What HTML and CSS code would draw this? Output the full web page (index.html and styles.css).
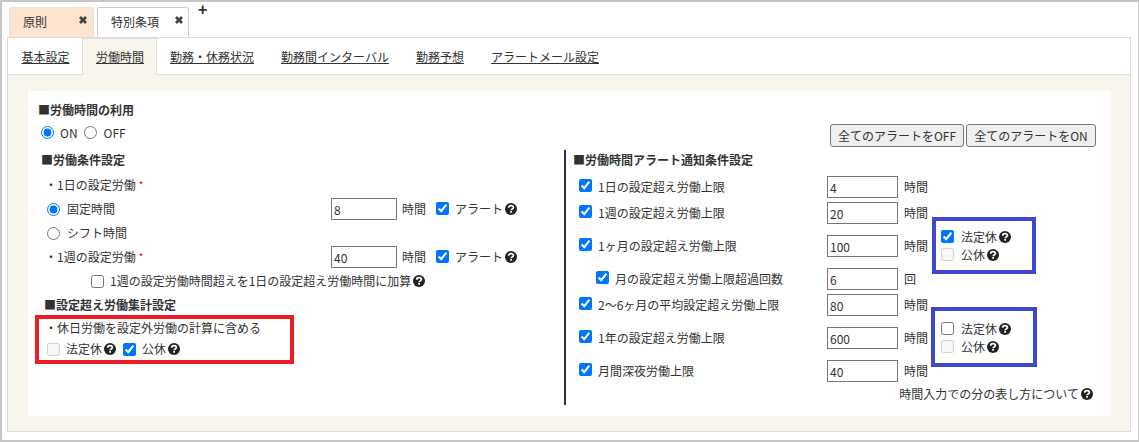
FILE: index.html
```html
<!DOCTYPE html>
<html lang="ja">
<head>
<meta charset="utf-8">
<title>特別条項</title>
<link rel="stylesheet" href="styles.css">
</head>
<body>
<svg class="defs" width="0" height="0" aria-hidden="true">
  <symbol id="help" viewBox="0 0 12 12">
    <circle cx="6" cy="6" r="6" fill="#222"/>
    <path d="M3.7 4.7C3.7 3.4 4.7 2.7 6 2.7C7.4 2.7 8.4 3.5 8.4 4.6C8.4 5.9 6.2 5.9 6.1 7.2" fill="none" stroke="#fff" stroke-width="1.7"/>
    <rect x="5.2" y="8" width="1.8" height="1.7" fill="#fff"/>
  </symbol>
  <symbol id="close" viewBox="0 0 10 10">
    <path d="M2 2L8 8M8 2L2 8" fill="none" stroke="#444" stroke-width="2.8"/>
  </symbol>
</svg>
<div class="frame">
  <div class="tabs">
    <div class="tab tab-peach"><span class="tab-label">原則</span><svg class="close"><use href="#close"/></svg></div>
    <div class="tab tab-white"><span class="tab-label">特別条項</span><svg class="close"><use href="#close"/></svg></div>
    <span class="plus">+</span>
  </div>
  <div class="panel">
    <nav class="subnav">
      <a class="subnav-item">基本設定</a>
      <a class="subnav-item active">労働時間</a>
      <a class="subnav-item">勤務・休務状況</a>
      <a class="subnav-item">勤務間インターバル</a>
      <a class="subnav-item">勤務予想</a>
      <a class="subnav-item">アラートメール設定</a>
    </nav>
    <div class="content">
      <div class="card">
        <div class="top">
          <div class="usage">
            <div class="heading">■労働時間の利用</div>
            <div class="onoff">
              <input type="radio" name="use" checked><span class="on-label">ON</span>
              <input type="radio" name="use"><span class="off-label">OFF</span>
            </div>
          </div>
          <div class="buttons">
            <button class="btn btn-off">全てのアラートをOFF</button>
            <button class="btn btn-on">全てのアラートをON</button>
          </div>
        </div>
        <div class="columns">
          <section class="left">
            <div class="heading h-left">■労働条件設定</div>
            <div class="lrow">
              <div class="lcell bullet">・1日の設定労働<span class="req">*</span></div>
            </div>
            <div class="lrow">
              <div class="lcell pick"><input type="radio" name="mode" checked><span>固定時間</span></div>
              <input class="num" type="text" value="8">
              <span class="unit">時間</span>
              <input class="alert-check" type="checkbox" checked>
              <span class="alert-label">アラート</span>
              <svg class="help"><use href="#help"/></svg>
            </div>
            <div class="lrow">
              <div class="lcell pick"><input type="radio" name="mode"><span>シフト時間</span></div>
            </div>
            <div class="lrow">
              <div class="lcell bullet">・1週の設定労働<span class="req">*</span></div>
              <input class="num" type="text" value="40">
              <span class="unit">時間</span>
              <input class="alert-check" type="checkbox" checked>
              <span class="alert-label">アラート</span>
              <svg class="help"><use href="#help"/></svg>
            </div>
            <div class="lrow add-row">
              <input type="checkbox">
              <span class="add-label">1週の設定労働時間超えを1日の設定超え労働時間に加算</span>
              <svg class="help"><use href="#help"/></svg>
            </div>
            <div class="heading h-over">■設定超え労働集計設定</div>
            <div class="holiday-title bullet">・休日労働を設定外労働の計算に含める</div>
            <div class="holiday-row">
              <input type="checkbox" disabled>
              <span class="hol-label">法定休</span>
              <svg class="help"><use href="#help"/></svg>
              <input class="hol-second" type="checkbox" checked>
              <span class="hol-label">公休</span>
              <svg class="help"><use href="#help"/></svg>
            </div>
          </section>
          <section class="right">
            <div class="heading h-right">■労働時間アラート通知条件設定</div>
            <div class="rrow first">
              <input type="checkbox" checked><span class="rlabel">1日の設定超え労働上限</span>
              <input class="num rnum" type="text" value="4"><span class="unit">時間</span>
            </div>
            <div class="rrow second">
              <input type="checkbox" checked><span class="rlabel">1週の設定超え労働上限</span>
              <input class="num rnum" type="text" value="20"><span class="unit">時間</span>
            </div>
            <div class="rrow wide">
              <input type="checkbox" checked><span class="rlabel">1ヶ月の設定超え労働上限</span>
              <input class="num rnum" type="text" value="100"><span class="unit">時間</span>
            </div>
            <div class="rrow wide sub">
              <input type="checkbox" checked><span class="rlabel">月の設定超え労働上限超過回数</span>
              <input class="num rnum" type="text" value="6"><span class="unit">回</span>
            </div>
            <div class="rrow tight">
              <input type="checkbox" checked><span class="rlabel">2～6ヶ月の平均設定超え労働上限</span>
              <input class="num rnum" type="text" value="80"><span class="unit">時間</span>
            </div>
            <div class="rrow wide">
              <input type="checkbox" checked><span class="rlabel">1年の設定超え労働上限</span>
              <input class="num rnum" type="text" value="600"><span class="unit">時間</span>
            </div>
            <div class="rrow wide">
              <input type="checkbox" checked><span class="rlabel">月間深夜労働上限</span>
              <input class="num rnum" type="text" value="40"><span class="unit">時間</span>
            </div>
            <div class="note">時間入力での分の表し方について<svg class="help"><use href="#help"/></svg></div>
          </section>
        </div>
        <div class="mark mark-red"></div>
        <div class="mark mark-blue blue-a">
          <div class="mark-row"><input type="checkbox" checked><span class="hol-label">法定休</span><svg class="help"><use href="#help"/></svg></div>
          <div class="mark-row"><input type="checkbox" disabled><span class="hol-label">公休</span><svg class="help"><use href="#help"/></svg></div>
        </div>
        <div class="mark mark-blue blue-b">
          <div class="mark-row"><input type="checkbox"><span class="hol-label">法定休</span><svg class="help"><use href="#help"/></svg></div>
          <div class="mark-row"><input type="checkbox" disabled><span class="hol-label">公休</span><svg class="help"><use href="#help"/></svg></div>
        </div>
      </div>
    </div>
  </div>
</div>
</body>
</html>
```

FILE: styles.css
```css
* { box-sizing: border-box; }
html, body { margin: 0; padding: 0; }
body {
  width: 1139px;
  height: 442px;
  overflow: hidden;
  font-family: "Noto Sans CJK JP", "Noto Sans", sans-serif;
  font-size: 12px;
  line-height: 18px;
  color: #333;
  background: #fff;
}
.defs { position: absolute; }
input[type="checkbox"], input[type="radio"] { margin: 0; flex: none; width: 13px; height: 13px; }
.frame {
  height: 442px;
  border: 2px solid #c6c6c6;
  border-right-width: 1px;
  padding: 5px 7px 8px 5px;
  display: flex;
  flex-direction: column;
}
.tabs { display: flex; height: 30px; padding-left: 2px; gap: 3px; flex: none; }
.tab {
  height: 30px;
  border: 1px solid #ccc;
  border-bottom: 0;
  border-radius: 3px 3px 0 0;
  display: flex;
  padding-top: 5px;
}
.tab-peach { width: 85px; background: #fce4cf; padding-left: 13px; border-color: #e5e0da; }
.tab-white { width: 92px; background: #fff; padding-left: 13px; }
.tab-peach .tab-label { width: 55px; }
.tab-white .tab-label { width: 63px; }
.close { width: 10px; height: 10px; margin-top: 2px; }
.plus { font: bold 16px/16px "Liberation Sans", sans-serif; color: #333; margin: -5px 0 0 6px; }
.panel {
  flex: 1;
  display: flex;
  flex-direction: column;
  border: 1px solid #ddd;
}
.subnav {
  display: flex;
  height: 37px;
  flex: none;
  border-bottom: 1px solid #ddd;
}
.subnav-item {
  padding: 10px 13.5px 0;
  text-decoration: underline;
  color: #333;
  margin-bottom: -1px;
}
.subnav-item.active {
  background: #f7f5ec;
  border: 1px solid #ddd;
  border-bottom: 0;
  margin-left: -1px;
  padding: 9px 11.5px 0 13px;
}
.content { flex: 1; background: #f7f5ec; padding: 16px 19px 15px 20px; display: flex; }
.card { flex: 1; background: #fff; position: relative; padding: 10px 0 0 0; }
.top { display: flex; justify-content: space-between; height: 49px; align-items: flex-end; }
.usage { padding-left: 10px; align-self: flex-start; margin-top: -1px; }
.heading { font-weight: 700; height: 20px; line-height: 20px; }
.usage .heading { margin-bottom: 1px; }
.onoff { display: flex; align-items: center; padding: 0 0 5px 3px; height: 27px; }
.on-label { margin: 2px 6px 0 6px; }
.off-label { margin: 2px 0 0 7px; }
.buttons { display: flex; gap: 2px; padding: 0 15px 3px 0; }
.btn {
  height: 23px;
  padding: 0;
  font: inherit;
  line-height: 18px;
  color: #333;
  background: #efefef;
  border: 1px solid #767676;
  border-radius: 3px;
}
.btn-off { width: 134px; }
.btn-on { width: 130px; }
.columns { display: flex; }
.left { width: 536px; height: 255px; padding-left: 14px; }
.right { flex: 1; height: 255px; border-left: 2px solid #333; padding-left: 7px; }
.h-left { margin: 0 0 3px -1px; }
.lrow { display: flex; align-items: center; height: 24px; }
.lcell { width: 289px; display: flex; align-items: center; flex: none; }
.bullet { padding-left: 3px; }
.req { color: #e00; margin: 5px 0 0 3px; font-size: 10px; line-height: 14px; align-self: flex-start; }
.lcell.bullet { height: 24px; }
.pick { padding-left: 5px; }
.pick span { margin-left: 7px; }
.num {
  height: 22px;
  width: 66px;
  padding: 0 2px;
  font: inherit;
  color: #333;
  border: 1px solid #767676;
  border-radius: 0;
  background: #fff;
  flex: none;
}
.unit { margin-left: 5px; width: 24px; flex: none; white-space: nowrap; }
.alert-check { margin: -2px 0 0 10px !important; }
.alert-label { margin-left: 6px; }
.help { width: 12px; height: 12px; margin-left: 2px; flex: none; }
.add-row { padding-left: 49px; }
.add-label { margin-left: 6px; }
.h-over { padding-left: 2px; height: 24px; line-height: 24px; }
.holiday-title { height: 23px; line-height: 22px; }
.holiday-row { display: flex; align-items: center; height: 18px; padding-left: 5px; }
.holiday-row .hol-label { margin-left: 6px; }
.hol-label { margin-left: 7px; }
.hol-second { margin-left: 7px !important; }
.rrow { display: flex; align-items: center; height: 22px; padding-left: 6px; margin-top: 5px; }
.rrow.first { margin-top: 6px; }
.rrow.second { margin-top: 4px; }
.rrow.wide { margin-top: 11px; }
.rrow.tight { margin-top: 4px; }
.rrow input[type="checkbox"] { margin-top: -3px; }
.rlabel { width: 229px; margin-left: 6px; flex: none; }
.sub { padding-left: 23px; }
.sub .rlabel { width: 212px; margin-left: 6px; }
.rnum { width: 71px; }
.rrow .unit { margin-left: 6px; }
.note { display: flex; align-items: center; justify-content: flex-end; height: 16px; margin-top: 4px; padding-right: 18px; }
.mark { position: absolute; border-style: solid; border-width: 4px; }
.mark-red { left: 7px; top: 224px; width: 259px; height: 49px; border-color: #ed1c24; }
.mark-blue { border-color: #3f48cc; background: #fff; display: flex; flex-direction: column; }
.blue-a { left: 904px; top: 126px; width: 104px; height: 57px; padding: 7px 0 0 5px; }
.blue-b { left: 903px; top: 216px; width: 106px; height: 60px; padding: 9px 0 0 6px; }
.mark-row { display: flex; align-items: center; height: 18px; }
.mark-row input { margin-top: -1px; }
```
